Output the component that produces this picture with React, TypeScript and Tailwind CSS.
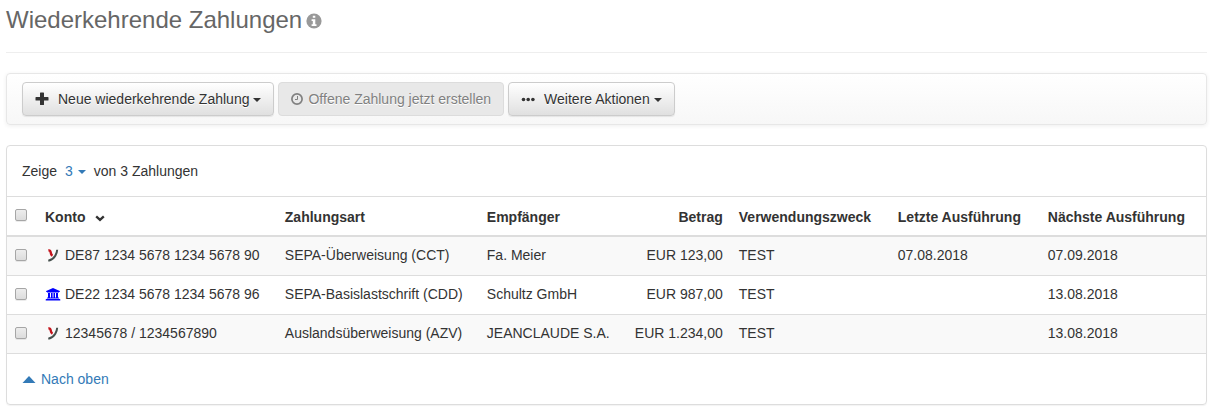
import type { ReactNode } from 'react';

type Payment = {
  account: string;
  icon: 'app' | 'bank';
  type: string;
  recipient: string;
  amount: string;
  purpose: string;
  last: string;
  next: string;
};

const payments: Payment[] = [
  {
    account: 'DE87 1234 5678 1234 5678 90',
    icon: 'app',
    type: 'SEPA-Überweisung (CCT)',
    recipient: 'Fa. Meier',
    amount: 'EUR 123,00',
    purpose: 'TEST',
    last: '07.08.2018',
    next: '07.09.2018',
  },
  {
    account: 'DE22 1234 5678 1234 5678 96',
    icon: 'bank',
    type: 'SEPA-Basislastschrift (CDD)',
    recipient: 'Schultz GmbH',
    amount: 'EUR 987,00',
    purpose: 'TEST',
    last: '',
    next: '13.08.2018',
  },
  {
    account: '12345678 / 1234567890',
    icon: 'app',
    type: 'Auslandsüberweisung (AZV)',
    recipient: 'JEANCLAUDE S.A.',
    amount: 'EUR 1.234,00',
    purpose: 'TEST',
    last: '',
    next: '13.08.2018',
  },
];

function InfoIcon() {
  return (
    <svg viewBox="0 0 16 16" className="size-4 text-[#999]" aria-hidden="true">
      <circle cx="8" cy="8" r="7.6" fill="currentColor" />
      <path d="M6.8 2.7h2.5v2.1H6.8zM5.6 6.3h3.7v5h1.2v1.6H5.6v-1.6h1.2V7.9H5.6z" fill="#fff" />
    </svg>
  );
}

function PlusIcon() {
  return (
    <svg viewBox="0 0 14 14" className="size-3.5" aria-hidden="true">
      <path
        d="M5 1.1q0-.6.6-.6h2.8q.6 0 .6.6V5h3.9q.6 0 .6.6v2.3q0 .6-.6.6H9v4q0 .6-.6.6H5.6q-.6 0-.6-.6v-4H1.1q-.6 0-.6-.6V5.6q0-.6.6-.6H5z"
        fill="currentColor"
      />
    </svg>
  );
}

function ClockIcon() {
  return (
    <svg viewBox="0 0 12 12" className="size-3" aria-hidden="true">
      <circle cx="6" cy="6" r="5.1" fill="none" stroke="currentColor" strokeWidth="1.7" />
      <path d="M6.5 3v3.5H4" fill="none" stroke="currentColor" strokeWidth="1" />
    </svg>
  );
}

function DotsIcon() {
  return (
    <svg viewBox="0 0 14 14" className="size-3.5" aria-hidden="true">
      <g fill="currentColor">
        <circle cx="2.5" cy="7.5" r="1.8" />
        <circle cx="7.2" cy="7.5" r="1.8" />
        <circle cx="11.9" cy="7.5" r="1.8" />
      </g>
    </svg>
  );
}

function Caret() {
  return (
    <svg viewBox="0 0 8 4" className="mt-0.5 h-1 w-2" aria-hidden="true">
      <path d="M0 0h8L4 4z" fill="currentColor" />
    </svg>
  );
}

function SortIcon() {
  return (
    <svg viewBox="0 0 10 7" className="mt-0.5 h-[7px] w-2.5" aria-hidden="true">
      <path d="M1.2 1.3L5 4.9l3.8-3.6" fill="none" stroke="currentColor" strokeWidth="2.3" />
    </svg>
  );
}

function AppIcon() {
  return (
    <svg viewBox="0 0 16 16" className="size-4" aria-hidden="true">
      <path d="M3.4 3.5C5 3.200 5.500 4 5.700 5.400c.2 1.700.6 2.700 1.800 3.400" fill="none" stroke="#c4141c" strokeWidth="2.400" />
      <path d="M12.200 2.800c-.1 1.900-.8 4-1.900 5.900-1.500 2.600-3.600 4.300-7 5.100" fill="none" stroke="#46504d" strokeWidth="2" />
    </svg>
  );
}

function BankIcon() {
  return (
    <svg viewBox="0 0 16 16" className="size-4 text-[#0000ff]" aria-hidden="true">
      <path
        d="M8 2l6.8 2.9v1H14q0 .5-.6.5H2.6Q2 6.4 2 5.9h-.8v-1zM3 7h2v4.5h1V7h1.6v4.5h.9V7H10v4.5h1V7h2v4.5h.5q.6 0 .6.5v.5H1.9V12q0-.5.6-.5H3zM1.3 13h13.4q.6 0 .6.6v.9H.7v-.9q0-.6.6-.6z"
        fill="currentColor"
      />
    </svg>
  );
}

function ToolbarButton({ children, disabled = false }: { children: ReactNode; disabled?: boolean }) {
  return (
    <button
      type="button"
      disabled={disabled}
      className="flex h-[34px] items-center rounded border border-[#ccc] bg-linear-to-b from-white to-[#e0e0e0] px-3 text-[#333] shadow-[0_1px_1px_rgba(0,0,0,0.08)] [text-shadow:0_1px_0_#fff] disabled:border-[#dcdcdc] disabled:bg-[#e8e8e8] disabled:bg-none disabled:text-[#808080] disabled:shadow-none"
    >
      {children}
    </button>
  );
}

function Checkbox({ label }: { label: string }) {
  return (
    <input
      type="checkbox"
      aria-label={label}
      className="block size-3 appearance-none rounded-xs border border-[#a6a6a6] bg-linear-to-b from-[#ededed] to-[#dcdcdc] shadow-[0_1px_0_rgba(0,0,0,0.08)] checked:bg-[#337ab7] checked:bg-none"
    />
  );
}

export default function App() {
  return (
    <main className="pr-2 pb-2 pl-1.5 font-['Liberation_Sans',Arial,sans-serif] text-sm leading-5 text-[#333]">
      <header className="flex items-center gap-1 border-b border-[#eee] pt-1 pb-4">
        <h1 className="text-2xl leading-8 text-[#666]">Wiederkehrende Zahlungen</h1>
        <button type="button" aria-label="Information" className="pt-0.5">
          <InfoIcon />
        </button>
      </header>

      {/* Toolbar */}
      <div className="mt-5 flex gap-1 rounded border border-[#e7e7e7] bg-linear-to-b from-white to-[#f7f7f7] px-[15px] py-2 shadow-[0_1px_4px_rgba(0,0,0,0.07)]">
        <ToolbarButton>
          <PlusIcon />
          <span className="mr-1 ml-[9px]">Neue wiederkehrende Zahlung</span>
          <Caret />
        </ToolbarButton>
        <ToolbarButton disabled>
          <ClockIcon />
          <span className="ml-[5px]">Offene Zahlung jetzt erstellen</span>
        </ToolbarButton>
        <ToolbarButton>
          <DotsIcon />
          <span className="mr-1 ml-[9px]">Weitere Aktionen</span>
          <Caret />
        </ToolbarButton>
      </div>

      {/* Payments */}
      <section className="mt-5 rounded border border-[#ddd] shadow-[0_1px_1px_rgba(0,0,0,0.05)]">
        <div className="flex items-center px-[15px] py-[15px]">
          <span>Zeige</span>
          <button type="button" className="mr-2 ml-2 flex items-center gap-[5px] text-[#337ab7]">
            3 <Caret />
          </button>
          <span>von 3 Zahlungen</span>
        </div>
        <table className="w-full table-fixed border-separate border-spacing-0 text-left [&_td]:h-[39px] [&_td]:border-b [&_td]:border-[#ddd] [&_td]:px-2 [&_td]:pt-2 [&_td]:align-top [&_th]:h-[41px] [&_th]:border-t [&_th]:border-b-2 [&_th]:border-[#ddd] [&_th]:px-2 [&_th]:pt-2.5 [&_th]:align-top">
          <colgroup>
            <col className="w-[30px]" />
            <col className="w-[20%]" />
            <col className="w-[202px]" />
            <col className="w-[148px]" />
            <col className="w-[104px]" />
            <col className="w-[159px]" />
            <col className="w-[150px]" />
            <col />
          </colgroup>
          <thead>
            <tr>
              <th>
                <div className="pt-0.5">
                  <Checkbox label="Alle auswählen" />
                </div>
              </th>
              <th aria-sort="descending">
                <button type="button" className="flex items-center gap-2.5 font-bold">
                  Konto <SortIcon />
                </button>
              </th>
              <th>Zahlungsart</th>
              <th>Empfänger</th>
              <th className="text-right">Betrag</th>
              <th>Verwendungszweck</th>
              <th>Letzte Ausführung</th>
              <th>Nächste Ausführung</th>
            </tr>
          </thead>
          <tbody>
            {payments.map((payment) => (
              <tr key={payment.account} className="odd:bg-[#f9f9f9]">
                <td>
                  <div className="pt-1">
                    <Checkbox label={`${payment.account} auswählen`} />
                  </div>
                </td>
                <td>
                  <div className="flex items-center gap-1 whitespace-nowrap">
                    {payment.icon === 'bank' ? <BankIcon /> : <AppIcon />}
                    {payment.account}
                  </div>
                </td>
                <td>{payment.type}</td>
                <td>{payment.recipient}</td>
                <td className="text-right whitespace-nowrap">{payment.amount}</td>
                <td>{payment.purpose}</td>
                <td>{payment.last}</td>
                <td>{payment.next}</td>
              </tr>
            ))}
          </tbody>
        </table>
        <div className="px-[15px] py-[15px]">
          <a href="#" className="flex w-fit items-center gap-[5px] text-[#337ab7]">
            <svg viewBox="0 0 14 7" className="h-[7px] w-3.5" aria-hidden="true">
              <path d="M.5 7L7 0l6.5 7z" fill="currentColor" />
            </svg>
            Nach oben
          </a>
        </div>
      </section>
    </main>
  );
}
